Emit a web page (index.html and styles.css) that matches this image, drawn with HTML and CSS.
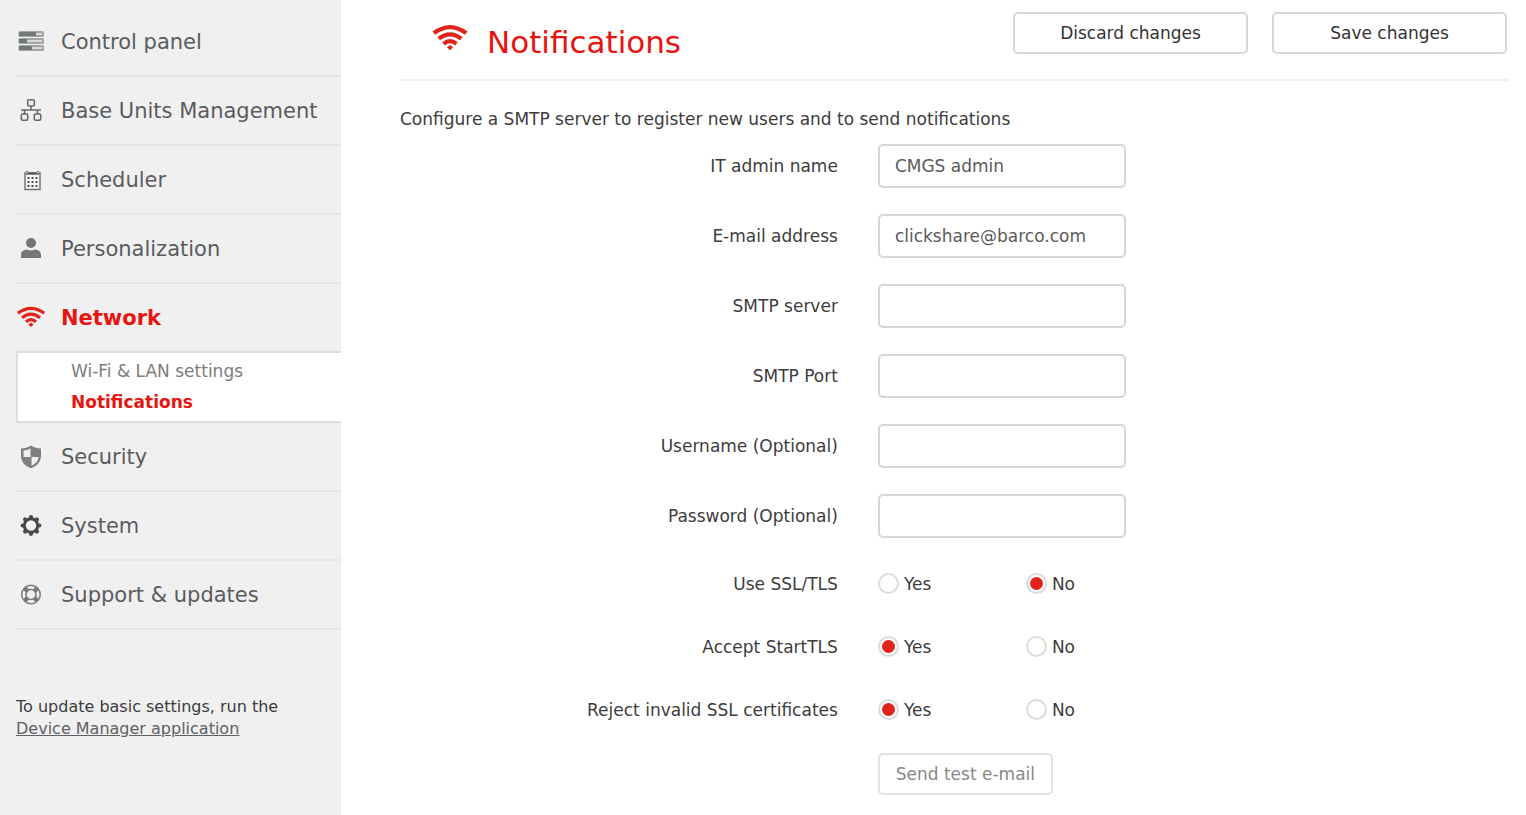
FILE: index.html
```html
<!DOCTYPE html>
<html lang="en">
<head>
<meta charset="utf-8">
<title>Notifications</title>
<link rel="stylesheet" href="styles.css">
</head>
<body>
<div class="layout">
  <aside class="sidebar">
    <nav class="nav">
      <a class="nav-item" href="#">
        <svg class="icon" viewBox="0 0 28 28"><g fill="#a3a6a6"><rect x="1.500" y="3" width="25.500" height="6" rx="1.500"/><rect x="1.500" y="10" width="25.500" height="6" rx="1.500"/><rect x="1.500" y="17" width="25.500" height="6" rx="1.500"/></g><g fill="#747878"><rect x="2" y="4" width="17" height="4"/><rect x="2" y="11" width="8" height="4"/><rect x="2" y="18" width="13" height="4"/></g><g fill="#d6d8d8"><rect x="19" y="5" width="6" height="2"/><rect x="10" y="12" width="15" height="2"/><rect x="15" y="19" width="10" height="2"/></g></svg>
        <span>Control panel</span>
      </a>
      <a class="nav-item" href="#">
        <svg class="icon" viewBox="0 0 28 28" fill="none" stroke="#666a6a" stroke-width="1.600"><rect x="10.700" y="2.800" width="6.600" height="6.200" rx="1.200"/><rect x="4.300" y="17" width="6.400" height="6.200" rx="1.200"/><rect x="17.300" y="17" width="6.400" height="6.200" rx="1.200"/><path d="M14 9v4M4 13h20M7.500 13v4M20.500 13v4"/></svg>
        <span>Base Units Management</span>
      </a>
      <a class="nav-item" href="#">
        <svg class="icon" viewBox="0 0 28 28"><path d="M8 7h15v16.500H8z" fill="#f5f5f5" stroke="#6c7070" stroke-width="1.400"/><path d="M9 7.500h13" stroke="#555959" stroke-width="2.400"/><g fill="#f0f0f0" stroke="#6c7070"><circle cx="10" cy="6.500" r="1.200"/><circle cx="21" cy="6.500" r="1.200"/></g><path d="M10.500 12h10.500M10.500 16h10.500M10.500 20h10.500" stroke="#4c5050" stroke-width="2" stroke-dasharray="2 2"/></svg>
        <span>Scheduler</span>
      </a>
      <a class="nav-item" href="#">
        <svg class="icon" viewBox="0 0 28 28" fill="#737777"><circle cx="14" cy="8" r="5"/><path d="M4 23v-3c0-3.500 2.500-5.200 6-5.500 2.500 1.400 5.500 1.400 8 0 3.500.3 6 2 6 5.500v3z"/></svg>
        <span>Personalization</span>
      </a>
      <a class="nav-item nav-item-active" href="#">
        <svg class="icon" viewBox="0 0 28 28" fill="none" stroke="#e2231a" stroke-width="3.200"><path d="M.800 9.200Q14-.600 27.200 9.200M5 13.700Q14 6.700 23 13.700M9 17.800Q14 13.600 19 17.800"/><path d="M14 18.600l2.600 2L14 23l-2.600-2.400z" fill="#e2231a" stroke="none"/></svg>
        <span>Network</span>
      </a>
      <div class="subnav">
        <a class="subnav-item" href="#">Wi-Fi &amp; LAN settings</a>
        <a class="subnav-item subnav-item-active" href="#">Notifications</a>
      </div>
      <a class="nav-item" href="#">
        <svg class="icon" viewBox="0 0 28 28"><path d="M14 2.500c3 2 6.500 2.800 10 3v7c0 6.500-4 10.500-10 12.800C8 23 4 19 4 12.500v-7c3.500-.2 7-1 10-3z" fill="#7d8181"/><path d="M13.500 5.500v8.500H6.500V7.600c2.500-.2 4.700-.8 7-2.100zM14.500 14h7c-.5 4.300-3.200 7-7 8.700z" fill="#f0f0f0"/></svg>
        <span>Security</span>
      </a>
      <a class="nav-item" href="#">
        <svg class="icon" viewBox="0 0 28 28" fill="none" stroke="#454a4a"><circle cx="14" cy="13.500" r="6.700" stroke-width="3"/><path d="M14 5.200v.1M14 21.700v.1M5.700 13.500h.1M22.200 13.500h.1M8.100 7.600l.1.100M19.800 19.300l.1.100M8.100 19.400l.1-.1M19.800 7.700l.1-.1" stroke-width="4.200" stroke-linecap="round"/></svg>
        <span>System</span>
      </a>
      <a class="nav-item" href="#">
        <svg class="icon" viewBox="0 0 28 28" fill="none" stroke="#777b7b"><circle cx="14" cy="13.500" r="9.300" stroke-width="1.500"/><circle cx="14" cy="13.500" r="5" stroke-width="1.500"/><path d="M7.600 7.100l3 3M17.400 16.900l3 3M7.600 19.900l3-3M17.400 10.100l3-3" stroke-width="4.500"/></svg>
        <span>Support &amp; updates</span>
      </a>
    </nav>
    <p class="sidebar-note">To update basic settings, run the<br><a href="#">Device Manager application</a></p>
  </aside>

  <main class="main">
    <header class="page-header">
      <svg class="title-icon" viewBox="0 0 28 28" fill="none" stroke="#e2231a" stroke-width="3.200"><path d="M1.400 10.200Q14 .800 26.600 10.200M5.200 14.500Q14 7.700 22.800 14.500M9 18.500Q14 14.500 19 18.500"/><path d="M14 19.400l2.400 1.800L14 23.600l-2.400-2.400z" fill="#e2231a" stroke="none"/></svg>
      <h1 class="title">Notifications</h1>
      <div class="actions">
        <button class="button" type="button">Discard changes</button>
        <button class="button" type="button">Save changes</button>
      </div>
    </header>
    <p class="intro">Configure a SMTP server to register new users and to send notifications</p>
    <form class="form">
      <div class="row"><label class="label" for="admin">IT admin name</label><input class="field" id="admin" type="text" value="CMGS admin"></div>
      <div class="row"><label class="label" for="email">E-mail address</label><input class="field" id="email" type="text" value="clickshare@barco.com"></div>
      <div class="row"><label class="label" for="server">SMTP server</label><input class="field" id="server" type="text"></div>
      <div class="row"><label class="label" for="port">SMTP Port</label><input class="field" id="port" type="text"></div>
      <div class="row"><label class="label" for="user">Username (Optional)</label><input class="field" id="user" type="text"></div>
      <div class="row"><label class="label" for="pass">Password (Optional)</label><input class="field" id="pass" type="password"></div>
      <div class="row row-choice" role="radiogroup" aria-labelledby="ssl">
        <span class="label" id="ssl">Use SSL/TLS</span>
        <div class="choices"><label class="choice"><input class="radio" type="radio" name="ssl">Yes</label><label class="choice"><input class="radio" type="radio" name="ssl" checked>No</label></div>
      </div>
      <div class="row row-choice" role="radiogroup" aria-labelledby="starttls">
        <span class="label" id="starttls">Accept StartTLS</span>
        <div class="choices"><label class="choice"><input class="radio" type="radio" name="starttls" checked>Yes</label><label class="choice"><input class="radio" type="radio" name="starttls">No</label></div>
      </div>
      <div class="row row-choice" role="radiogroup" aria-labelledby="reject">
        <span class="label" id="reject">Reject invalid SSL certificates</span>
        <div class="choices"><label class="choice"><input class="radio" type="radio" name="reject" checked>Yes</label><label class="choice"><input class="radio" type="radio" name="reject">No</label></div>
      </div>
      <div class="row"><button class="button button-test" type="button" disabled>Send test e-mail</button></div>
    </form>
  </main>
</div>
</body>
</html>
```
FILE: styles.css
```css
* {
  box-sizing: border-box;
}

body {
  margin: 0;
  background: #fff;
  color: #3c3c3c;
  font-family: Verdana, "DejaVu Sans", sans-serif;
  font-size: 17px;
  line-height: 22px;
}

.layout {
  display: flex;
  min-height: 100vh;
}

.sidebar {
  flex: 0 0 341px;
  padding: 8px 0 0 16px;
  background: #f0f0f0;
}

.nav-item {
  display: flex;
  align-items: center;
  gap: 16px;
  height: 69px;
  padding-left: 1px;
  border-bottom: 2px solid #e6e6e6;
  color: #5a5c60;
  font-size: 21px;
  text-decoration: none;
}

.nav-item-active {
  height: 67px;
  border-bottom: 0;
  color: #e81410;
  font-weight: bold;
}

.icon {
  flex: none;
  width: 28px;
  height: 28px;
}

.subnav {
  display: flex;
  flex-direction: column;
  gap: 9px;
  padding: 7px 0 8px 53px;
  border: 2px solid #dedede;
  border-right: 0;
  background: #fff;
}

.subnav-item {
  color: #7c7c7c;
  text-decoration: none;
}

.subnav-item-active {
  color: #e81410;
  font-weight: bold;
}

.sidebar-note {
  margin: 66px 0 0;
  font-size: 16px;
}

.sidebar-note a {
  color: #5e6064;
}

.main {
  flex: 1;
  min-width: 0;
  padding: 0 18px 20px 59px;
}

.page-header {
  display: flex;
  align-items: flex-start;
  padding: 12px 1px 25px 32px;
  border-bottom: 2px solid #f0f0f0;
}

.title-icon {
  width: 36px;
  height: 36px;
  margin: 8px 19px 0 0;
}

.title {
  margin: 10px 0 0;
  color: #e81410;
  font-size: 31px;
  font-weight: normal;
  line-height: 40px;
}

.page-header .title,
.page-header .title-icon {
  margin-bottom: -8px;
}

.actions {
  display: flex;
  gap: 24px;
  margin-left: auto;
}

.button {
  width: 235px;
  height: 42px;
  border: 2px solid #d8d8d8;
  border-radius: 5px;
  background: #fff;
  color: #333;
  font: inherit;
}

.intro {
  margin: 27px 0 14px;
}

.form {
  display: flex;
  flex-direction: column;
  gap: 26px;
}

.row {
  display: grid;
  grid-template-columns: 41fr 59fr;
  column-gap: 40px;
  align-items: center;
}

.row-choice {
  height: 37px;
  padding-top: 2px;
}

.label {
  text-align: right;
}

.field {
  width: 248px;
  height: 44px;
  padding: 0 15px;
  border: 2px solid #d6d6d6;
  border-radius: 5px;
  background: #fff;
  color: #5a5a5a;
  font: inherit;
}

.choices {
  display: flex;
}

.choice {
  display: flex;
  align-items: center;
  gap: 5px;
  width: 148px;
}

.radio {
  appearance: none;
  width: 21px;
  height: 21px;
  margin: 0;
  border: 2px solid #dcdcdc;
  border-radius: 50%;
  background: #fff;
}

.radio:checked {
  padding: 2px;
  background: #e2231a content-box;
}

.button-test {
  grid-column: 2;
  width: 175px;
  border-color: #e2e2e2;
  color: #888;
}
```
